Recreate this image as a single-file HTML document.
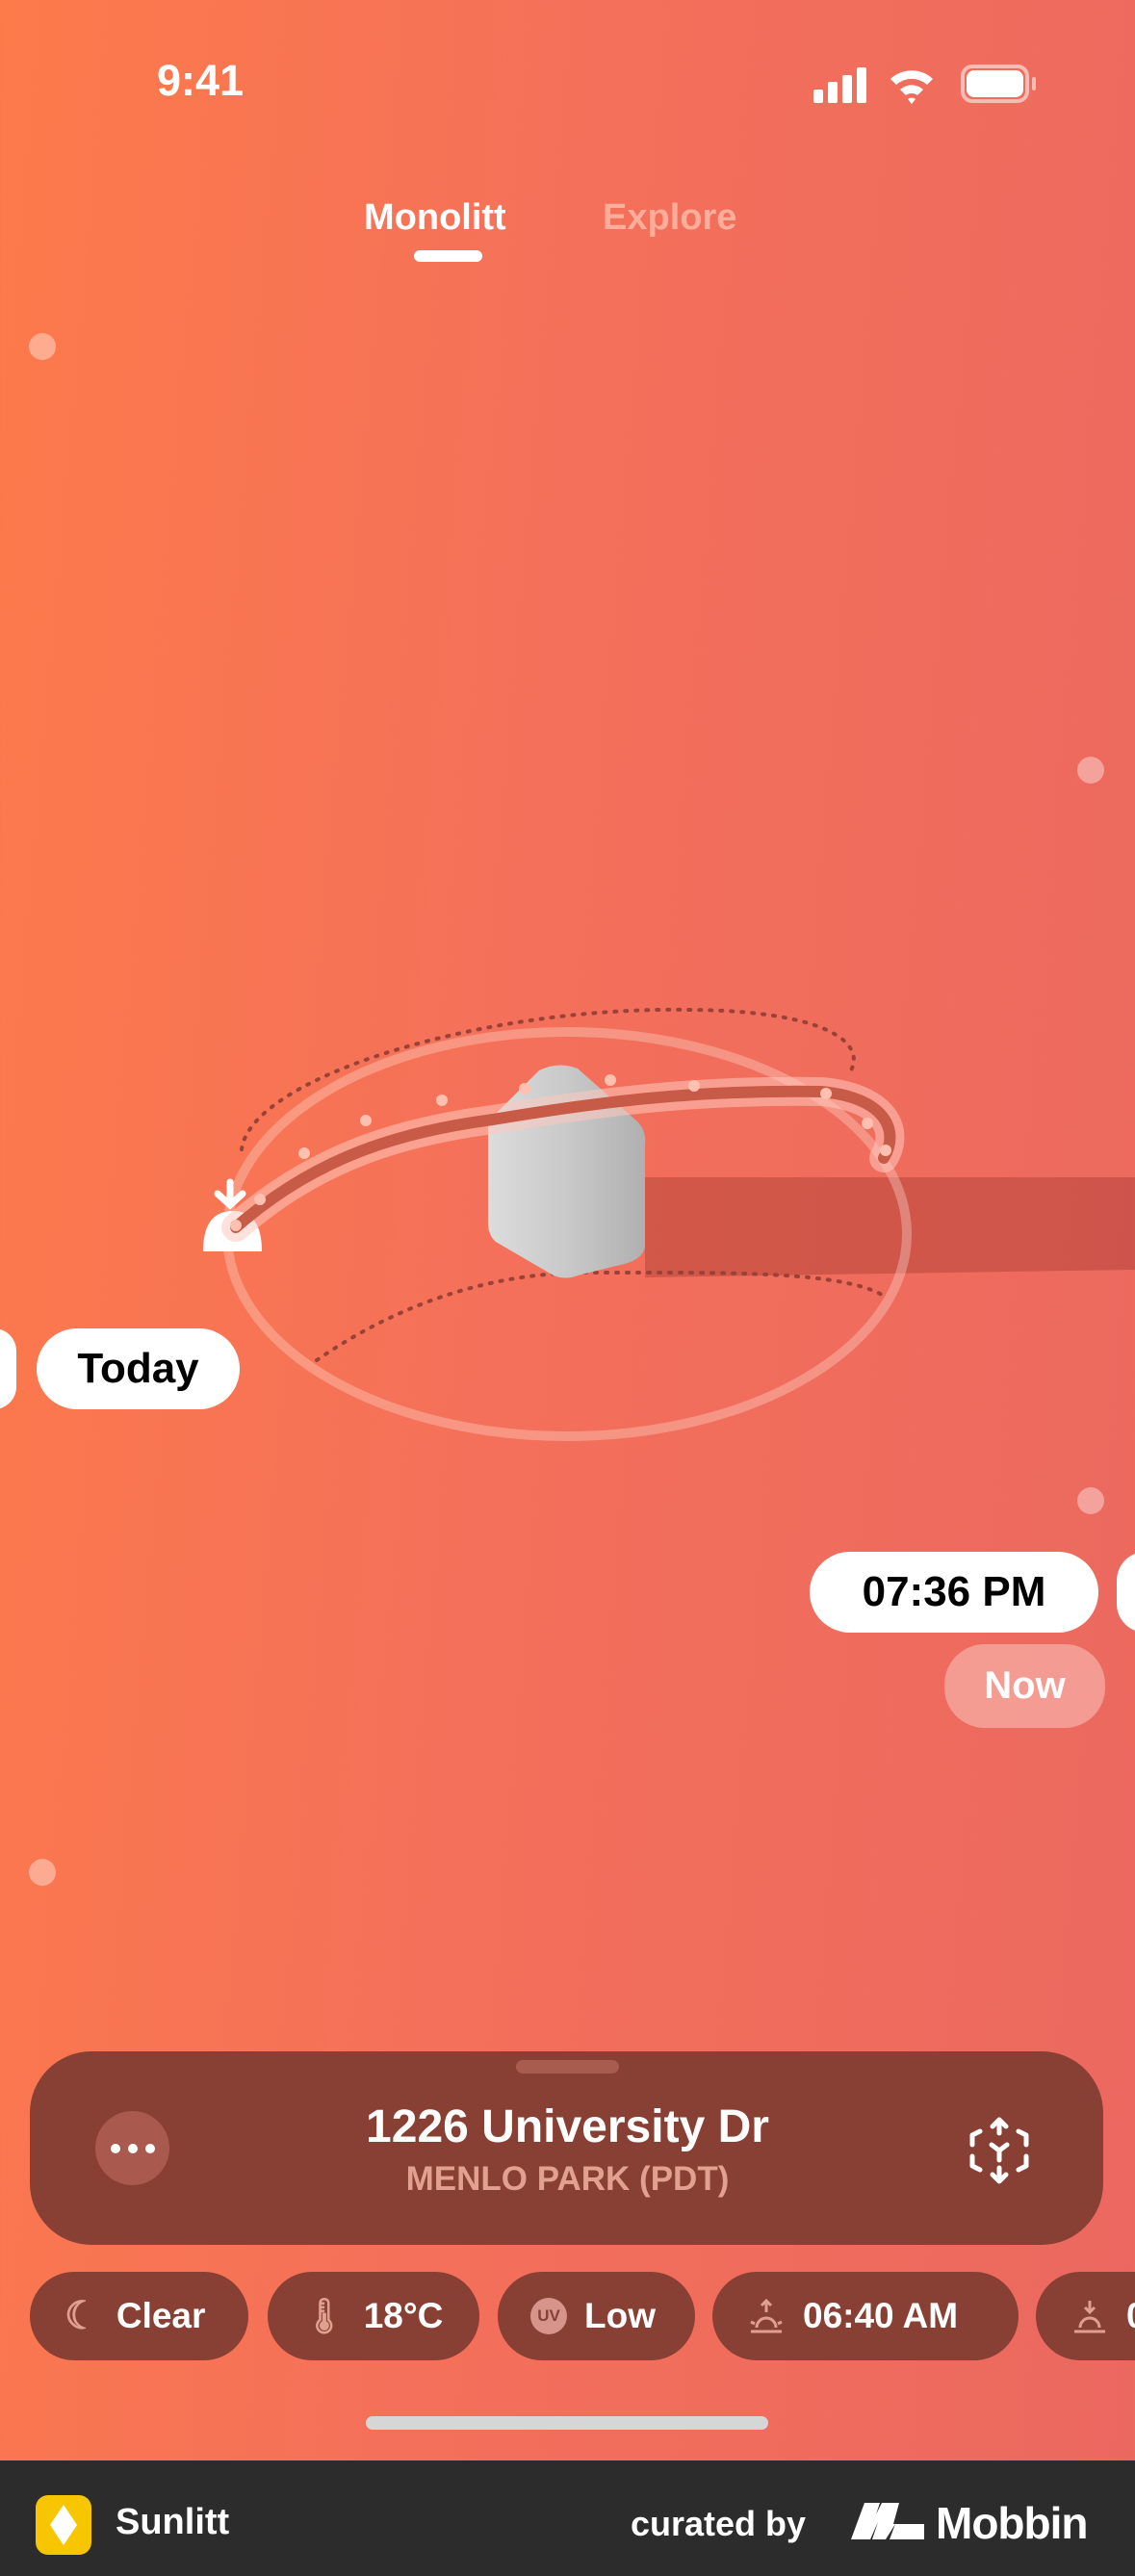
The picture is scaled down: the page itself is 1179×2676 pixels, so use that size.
<!DOCTYPE html>
<html><head><meta charset="utf-8">
<style>
*{margin:0;padding:0;box-sizing:border-box}
body{width:1179px;height:2676px;overflow:hidden;font-family:"Liberation Sans",sans-serif;position:relative;
background:linear-gradient(95deg,#fd7a4b 0%,#f4705a 45%,#eb6860 100%);}
.abs{position:absolute}
.dot{position:absolute;width:28px;height:28px;border-radius:50%;background:rgba(255,255,255,0.38)}
.pill{position:absolute;background:#fff;border-radius:42px;color:#000;font-size:44px;font-weight:bold;display:flex;align-items:center;justify-content:center}
.chip{position:absolute;top:2360px;height:92px;border-radius:46px;background:#883f34;color:#fff;font-size:37px;font-weight:bold;display:flex;align-items:center;padding-left:36px;gap:18px}
</style></head><body>
<div class="abs" style="left:163px;top:58px;font-size:45px;color:#fff;font-weight:bold">9:41</div>
<div class="abs" style="left:845px;top:93px;width:10px;height:14px;background:#fff;border-radius:2px"></div>
<div class="abs" style="left:860px;top:85px;width:10px;height:22px;background:#fff;border-radius:2px"></div>
<div class="abs" style="left:875px;top:78px;width:10px;height:29px;background:#fff;border-radius:2px"></div>
<div class="abs" style="left:890px;top:70px;width:10px;height:37px;background:#fff;border-radius:2px"></div>
<svg class="abs" style="left:922px;top:68px" width="50" height="42" viewBox="0 0 50 42"><path d="M3 14 A32 32 0 0 1 47 14 L41 20 A24 24 0 0 0 9 20Z M13 25 A18 18 0 0 1 37 25 L31 31 A10 10 0 0 0 19 31Z M25 40 L21 35 A6 6 0 0 1 29 35Z" fill="#fff"/></svg>
<div class="abs" style="left:998px;top:67px;width:71px;height:40px;border:4px solid rgba(255,255,255,0.55);border-radius:12px"></div>
<div class="abs" style="left:1004px;top:73px;width:59px;height:28px;background:#fff;border-radius:8px"></div>
<div class="abs" style="left:1072px;top:80px;width:4px;height:14px;background:rgba(255,255,255,0.55);border-radius:2px"></div>

<div class="abs" style="left:378px;top:205px;font-size:38px;color:#fff;font-weight:bold">Monolitt</div>
<div class="abs" style="left:626px;top:205px;font-size:38px;color:rgba(255,190,170,0.8);font-weight:bold">Explore</div>
<div class="abs" style="left:430px;top:260px;width:71px;height:12px;background:#fff;border-radius:6px"></div>

<div class="dot" style="left:30px;top:346px"></div>
<div class="dot" style="left:1119px;top:786px"></div>
<div class="dot" style="left:1119px;top:1545px"></div>
<div class="dot" style="left:30px;top:1931px"></div>

<svg class="abs" style="left:0;top:1000px" width="1179" height="540" viewBox="0 1000 1179 540">
 <polygon points="670,1223 1179,1223 1179,1319 670,1327" fill="rgba(170,60,50,0.45)"/>
 <ellipse cx="589" cy="1282" rx="353" ry="210" fill="none" stroke="rgba(255,220,210,0.35)" stroke-width="10"/>
 <path d="M251 1194 C260 1120 500 1045 717 1049 C850 1050 900 1080 884 1112" fill="none" stroke="#9a4238" stroke-width="4" stroke-dasharray="2 9" stroke-linecap="round"/>
 <path d="M329 1413 C420 1350 520 1320 620 1322 C760 1322 880 1320 921 1348" fill="none" stroke="#9a4238" stroke-width="4" stroke-dasharray="2 9" stroke-linecap="round"/>
 <defs><linearGradient id="blk" x1="0" x2="1"><stop offset="0" stop-color="#dcdcdc"/><stop offset="0.5" stop-color="#c9c9c9"/><stop offset="1" stop-color="#b0b0b0"/></linearGradient></defs>
 <path d="M507 1165 L560 1112 Q580 1102 600 1110 L662 1165 Q672 1175 670 1190 L670 1295 Q668 1310 640 1315 L600 1325 Q588 1330 575 1325 L515 1290 Q507 1283 507 1270Z" fill="url(#blk)"/>
 <path d="M211 1300 Q211 1258 242 1258 Q272 1258 272 1300 Z" fill="#fff"/>
 <path d="M245 1275 C330 1200 420 1175 512 1163 C620 1145 720 1132 853 1134 C920 1140 935 1175 918 1203" fill="none" stroke="rgba(255,200,190,0.55)" stroke-width="30" stroke-linecap="round"/>
 <path d="M245 1275 C330 1200 420 1175 512 1163 C620 1145 720 1132 853 1134 C920 1140 935 1175 918 1203" fill="none" stroke="#c85a48" stroke-width="12" stroke-linecap="round"/>
 <g fill="#ffc0b0"><circle cx="245" cy="1273" r="6"/><circle cx="270" cy="1246" r="6"/><circle cx="316" cy="1198" r="6"/><circle cx="380" cy="1164" r="6"/><circle cx="459" cy="1143" r="6"/><circle cx="545" cy="1131" r="6"/><circle cx="634" cy="1122" r="6"/><circle cx="721" cy="1128" r="6"/><circle cx="858" cy="1136" r="6"/><circle cx="901" cy="1167" r="6"/><circle cx="920" cy="1195" r="6"/></g>
 <path d="M239 1228 v22 M226 1240 l13 12 l13 -12" stroke="#fff" stroke-width="7" fill="none" stroke-linecap="round"/>
</svg>

<div class="pill" style="left:-30px;top:1380px;width:47px;height:84px"></div>
<div class="pill" style="left:38px;top:1380px;width:211px;height:84px">Today</div>
<div class="pill" style="left:841px;top:1612px;width:300px;height:84px">07:36 PM</div>
<div class="pill" style="left:1160px;top:1612px;width:60px;height:84px"></div>
<div class="pill" style="left:981px;top:1708px;width:167px;height:87px;background:rgba(255,230,225,0.4);color:#fff;font-size:40px">Now</div>

<div class="abs" style="left:31px;top:2131px;width:1115px;height:201px;background:#883f34;border-radius:64px"></div>
<div class="abs" style="left:536px;top:2140px;width:107px;height:14px;background:#a85c50;border-radius:7px"></div>
<div class="abs" style="left:99px;top:2193px;width:77px;height:77px;border-radius:50%;background:#a9594d"></div>
<div class="abs" style="left:115px;top:2227px;width:10px;height:10px;border-radius:50%;background:#fff"></div>
<div class="abs" style="left:133px;top:2227px;width:10px;height:10px;border-radius:50%;background:#fff"></div>
<div class="abs" style="left:151px;top:2227px;width:10px;height:10px;border-radius:50%;background:#fff"></div>
<div class="abs" style="left:0;width:1179px;top:2182px;text-align:center;color:#fff;font-size:48px;font-weight:bold">1226 University Dr</div>
<div class="abs" style="left:0;width:1179px;top:2244px;text-align:center;color:#e2a090;font-size:35px;font-weight:bold">MENLO PARK (PDT)</div>
<svg class="abs" style="left:1002px;top:2198px" width="72" height="72" viewBox="0 0 72 72" fill="none" stroke="#fff" stroke-width="5" stroke-linecap="round" stroke-linejoin="round">
 <path d="M36 4 v14 M29 11 l7 -7 l7 7 M36 68 v-14 M29 61 l7 7 l7 -7 M8 20 l8 -4 M8 20 v10 M64 20 l-8 -4 M64 20 v10 M8 52 l8 4 M8 52 v-10 M64 52 l-8 4 M64 52 v-10 M28 30 l8 6 l8 -6 M36 36 v10"/></svg>

<div class="chip" style="left:31px;width:227px"><span style="color:#e0a090;font-size:40px">☾</span>Clear</div>
<div class="chip" style="left:278px;width:220px"><span style="color:#e0a090;font-size:36px">🌡</span>18°C</div>
<div class="chip" style="left:517px;width:205px;padding-left:34px"><span style="display:inline-block;width:38px;height:38px;border-radius:50%;background:#d6948a;color:#883f34;font-size:17px;font-weight:bold;text-align:center;line-height:38px">UV</span>Low</div>
<div class="chip" style="left:740px;width:318px"><svg width="40" height="40" viewBox="0 0 40 40" stroke="#e0a090" stroke-width="3" fill="none"><path d="M20 4 v12 M15 9 l5-5 l5 5 M4 36 h32 M10 32 a10 10 0 0 1 20 0 M4 26 l4 2 M36 26 l-4 2"/></svg>06:40 AM</div>
<div class="chip" style="left:1076px;width:200px"><svg width="40" height="40" viewBox="0 0 40 40" stroke="#e0a090" stroke-width="3" fill="none"><path d="M20 4 v12 M15 11 l5 5 l5 -5 M4 36 h32 M10 32 a10 10 0 0 1 20 0"/></svg>0</div>

<div class="abs" style="left:380px;top:2510px;width:418px;height:14px;background:#d6d6d6;border-radius:7px"></div>

<div class="abs" style="left:0;top:2556px;width:1179px;height:120px;background:#2c2c2c"></div>
<div class="abs" style="left:37px;top:2592px;width:58px;height:62px;background:#f7c600;border-radius:13px"></div>
<div class="abs" style="left:52px;top:2602px;width:28px;height:42px;background:#fff;clip-path:polygon(50% 0,100% 50%,50% 100%,0 50%)"></div>
<div class="abs" style="left:120px;top:2599px;color:#fff;font-size:38px;font-weight:bold">Sunlitt</div>
<div class="abs" style="left:655px;top:2601px;color:#fff;font-size:36px;font-weight:bold">curated by</div>
<svg class="abs" style="left:884px;top:2598px" width="76" height="40" viewBox="0 0 76 40"><path d="M0 40 L14 2 H30 L26 14 L32 2 H50 L44 24 H76 V40 H40 L46 24 L36 40 H22 L28 22 L20 40Z" fill="#fff"/></svg>
<div class="abs" style="left:972px;top:2594px;color:#fff;font-size:46px;font-weight:bold;letter-spacing:-1px">Mobbin</div>
</body></html>
